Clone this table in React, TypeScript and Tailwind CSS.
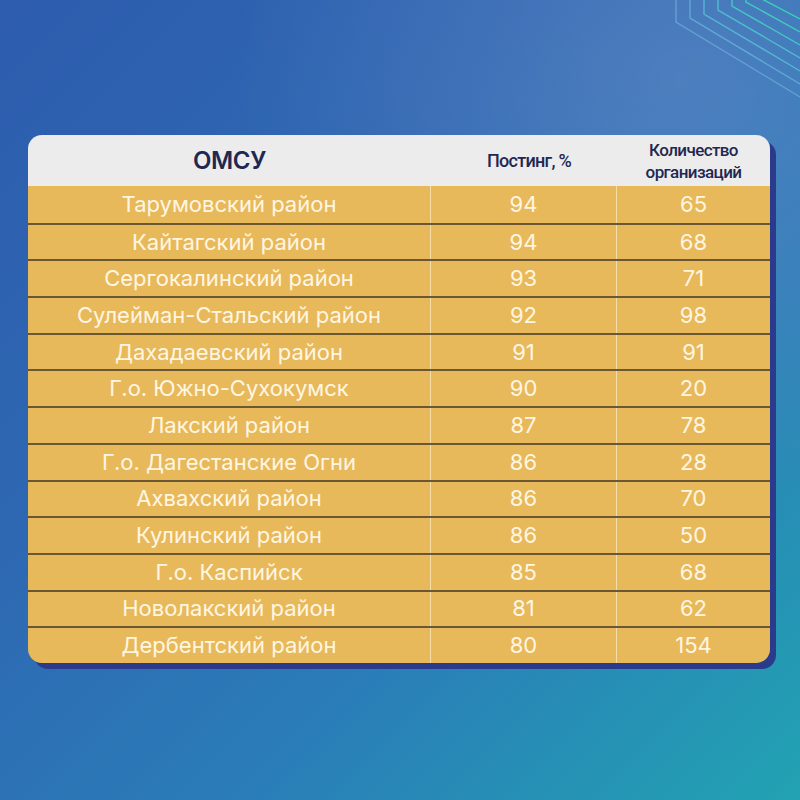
import React from "react";

const rows: [string, number, number][] = [
	["Тарумовский район", 94, 65],
	["Кайтагский район", 94, 68],
	["Сергокалинский район", 93, 71],
	["Сулейман-Стальский район", 92, 98],
	["Дахадаевский район", 91, 91],
	["Г.о. Южно-Сухокумск", 90, 20],
	["Лакский район", 87, 78],
	["Г.о. Дагестанские Огни", 86, 28],
	["Ахвахский район", 86, 70],
	["Кулинский район", 86, 50],
	["Г.о. Каспийск", 85, 68],
	["Новолакский район", 81, 62],
	["Дербентский район", 80, 154],
];

const lineColors = [
	"#6aa6d6",
	"#62b3d6",
	"#58c0d4",
	"#4ecbd0",
	"#46d4c8",
	"#3fdcc0",
	"#3ae2b8",
];

function Corner() {
	return (
		<svg
			className="pointer-events-none absolute top-0 right-0"
			width="130"
			height="110"
			viewBox="670 0 130 110"
		>
			{lineColors.map((c, i) => {
				const x = 676 + i * 14;
				const y = 22 - i * 4;
				const endY = 97 - i * 13;
				return (
					<polyline
						key={c}
						points={`${x},0 ${x},${y} 800,${endY}`}
						fill="none"
						stroke={c}
						strokeWidth="1.4"
						opacity="0.85"
					/>
				);
			})}
		</svg>
	);
}

export default function App() {
	return (
		<div className="relative h-[800px] w-[800px] overflow-hidden bg-[linear-gradient(135deg,#2d5cae_0%,#2e68b2_35%,#2a7db8_65%,#22a3b2_100%)] font-['Inter','Noto_Sans',sans-serif]">
			<div className="absolute inset-0 bg-[radial-gradient(circle_at_85%_10%,rgba(110,140,200,0.5),rgba(110,140,200,0)_45%)]" />
			<Corner />
			<div className="relative pt-[135px] pl-[28px]">
				<div className="w-[742px] overflow-hidden rounded-[14px] shadow-[6px_6px_0_#2c3a8c]">
					<div className="flex h-[51px] items-center bg-[#ececec] text-[#1f2752]">
						<div className="w-[403px] text-center text-[24px] font-semibold tracking-[-0.3px]">
							ОМСУ
						</div>
						<div className="w-[186px] pl-[10px] text-center font-['Roboto',sans-serif] text-[18px] font-medium tracking-[-0.7px]">
							Постинг, %
						</div>
						<div className="flex-1 text-center font-['Roboto',sans-serif] text-[17px] leading-[22px] font-medium tracking-[-0.6px]">
							Количество
							<br />
							организаций
						</div>
					</div>
					{rows.map(([name, post, count], i) => (
						<div
							key={name}
							className={`flex h-[36.7px] bg-[#e8b95b] text-[22px] text-[#fff6e2] ${
								i > 0 ? "border-t-2 border-[#6b5733]" : ""
							}`}
						>
							<div className="flex w-[403px] items-center justify-center border-r border-[#f4dea6]">
								{name}
							</div>
							<div className="flex w-[186px] items-center justify-center border-r border-[#f4dea6]">
								{post}
							</div>
							<div className="flex flex-1 items-center justify-center">{count}</div>
						</div>
					))}
				</div>
			</div>
		</div>
	);
}
